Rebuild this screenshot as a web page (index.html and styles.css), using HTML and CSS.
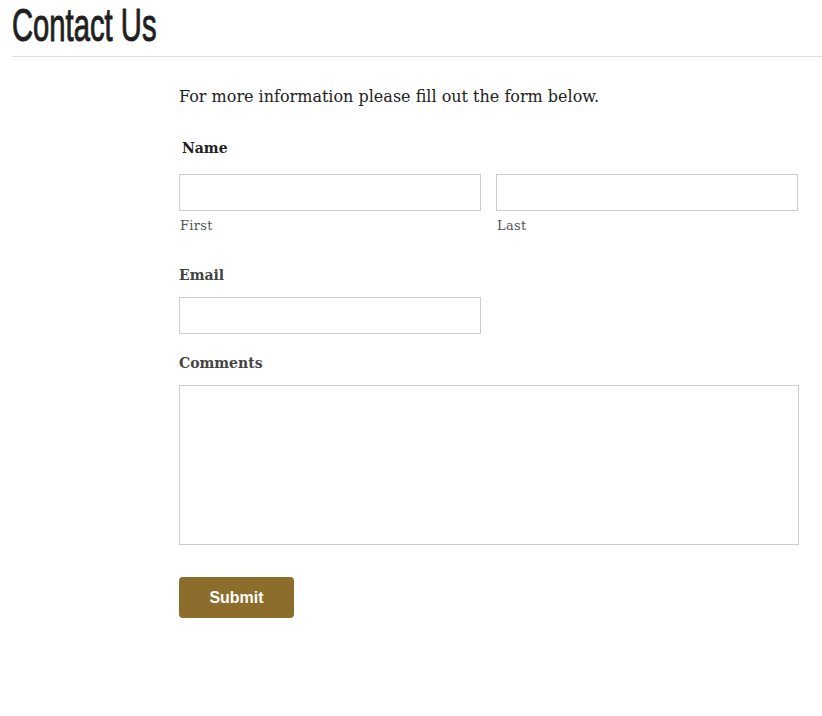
FILE: index.html
```html
<!DOCTYPE html>
<html>
<head>
<meta charset="utf-8">
<link rel="stylesheet" href="styles.css">
</head>
<body>
<header class="page-header">
  <h1 class="title">Contact Us</h1>
</header>
<main class="content">
  <p class="intro">For more information please fill out the form below.</p>
  <form class="form">
    <div class="field">
      <div class="label label-name">Name</div>
      <div class="name-row">
        <div class="sub">
          <input class="input" type="text">
          <span class="sublabel">First</span>
        </div>
        <div class="sub">
          <input class="input" type="text">
          <span class="sublabel">Last</span>
        </div>
      </div>
    </div>
    <div class="field field-email">
      <div class="label">Email</div>
      <input class="input input-email" type="text">
    </div>
    <div class="field field-comments">
      <div class="label">Comments</div>
      <textarea class="textarea"></textarea>
    </div>
    <button class="submit" type="button">Submit</button>
  </form>
</main>
</body>
</html>
```
FILE: styles.css
```css
html, body { margin: 0; padding: 0; background: #fff; }
body {
  font-family: "DejaVu Serif", "Liberation Serif", serif;
  color: #222;
}
.page-header {
  margin-left: 12px;
  border-bottom: 1px solid #e0e0e0;
  height: 56px;
}
.title {
  margin: 0;
  padding-top: 1px;
  font-family: "Liberation Sans Narrow", "Liberation Sans", sans-serif;
  font-weight: normal;
  font-size: 46px;
  line-height: 48px;
  color: #1f1f1f;
  -webkit-text-stroke: 1px #1f1f1f;
  transform: scaleX(0.635);
  transform-origin: left top;
  white-space: nowrap;
}
.content {
  padding-left: 179px;
  width: 620px;
}
.intro {
  margin: 29px 0 0 0;
  font-size: 16px;
  line-height: 22px;
  color: #222;
}
.form { margin-top: 31px; }
.label {
  font-weight: bold;
  font-size: 14px;
  line-height: 18px;
  color: #444;
}
.label-name { padding-left: 3px; color: #222; }
.name-row {
  display: flex;
  gap: 15px;
  margin-top: 17px;
}
.sub { display: flex; flex-direction: column; width: 302px; }
.input {
  box-sizing: border-box;
  height: 37px;
  width: 100%;
  border: 1px solid #cccccc;
  margin: 0;
  padding: 0 8px;
  background: #fff;
}
.sublabel {
  margin-top: 7px;
  padding-left: 1px;
  font-size: 13px;
  line-height: 16px;
  color: #555;
  letter-spacing: 0.3px;
}
.field-email { margin-top: 32px; }
.input-email { width: 302px; margin-top: 13px; display: block; }
.field-comments { margin-top: 20px; }
.field-comments .label { margin-bottom: 13px; }
.textarea {
  display: block;
  box-sizing: border-box;
  width: 620px;
  height: 160px;
  border: 1px solid #cccccc;
  margin: 0;
  resize: none;
}
.submit {
  margin-top: 32px;
  width: 115px;
  height: 41px;
  border: none;
  border-radius: 4px;
  background: #8c6d2c;
  color: #fff;
  font-family: "Liberation Sans", Arial, sans-serif;
  font-weight: bold;
  font-size: 16px;
  cursor: pointer;
}
```
